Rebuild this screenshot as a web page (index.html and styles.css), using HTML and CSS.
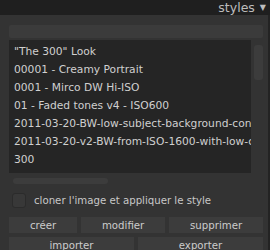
FILE: index.html
```html
<!DOCTYPE html>
<html lang="fr">
<head>
    <meta charset="UTF-8">
    <title>styles</title>
    <link rel="stylesheet" href="styles.css">
</head>
<body>
    <div class="header">
        <span class="header-title">styles</span>
        <span class="header-arrow">&#9660;</span>
    </div>

    <div class="main">
        <div class="panel">
            <div class="search-entry"></div>

            <div class="list-row">
                <div class="style-list">
                    <div class="style-item">"The 300" Look</div>
                    <div class="style-item">00001 - Creamy Portrait</div>
                    <div class="style-item">0001 - Mirco DW Hi-ISO</div>
                    <div class="style-item">01 - Faded tones v4 - ISO600</div>
                    <div class="style-item">2011-03-20-BW-low-subject-background-contrast</div>
                    <div class="style-item">2011-03-20-v2-BW-from-ISO-1600-with-low-contrast</div>
                    <div class="style-item">300</div>
                </div>
                <div class="vscroll">
                    <div class="vscroll-thumb"></div>
                </div>
            </div>

            <div class="hscroll"></div>

            <label class="check-row">
                <span class="checkbox"></span>
                <span class="check-label">cloner l'image et appliquer le style</span>
            </label>

            <div class="button-row">
                <button class="btn">créer</button>
                <button class="btn">modifier</button>
                <button class="btn">supprimer</button>
            </div>
            <div class="button-row even">
                <button class="btn">importer</button>
                <button class="btn">exporter</button>
            </div>
        </div>
        <div class="edge"></div>
    </div>
</body>
</html>
```

FILE: styles.css
```css
body {
    margin: 0;
    background-color: #333333;
    font-family: "DejaVu Sans", sans-serif;
    font-size: 10.2px;
    color: #cccccc;
    overflow: hidden;
}

.header {
    height: 15px;
    background-color: #1f1f1f;
    display: flex;
    justify-content: flex-end;
    align-items: center;
    padding-right: 4px;
    gap: 5px;
}

.header-title {
    font-size: 12.5px;
    color: #bdbdbd;
    line-height: 15px;
}

.header-arrow {
    font-size: 8px;
    color: #bdbdbd;
    line-height: 15px;
}

.main {
    display: flex;
    height: 235px;
}

.panel {
    width: 254px;
    padding: 10px 5px 0 9px;
}

.edge {
    width: 2px;
    background-color: #232323;
}

.search-entry {
    height: 13px;
    background-color: #3b3b3b;
    border-radius: 2px;
    margin-bottom: 2px;
}

.list-row {
    display: flex;
    gap: 3px;
}

.style-list {
    flex: 1;
    min-width: 0;
    height: 126px;
    padding: 3px 0 4px 5px;
    background-color: #252525;
    overflow: hidden;
}

.style-item {
    height: 18px;
    line-height: 18px;
    font-size: 10.7px;
    white-space: nowrap;
    color: #d0d0d0;
}

.vscroll {
    width: 9px;
}

.vscroll-thumb {
    margin-top: 5px;
    height: 35px;
    border-radius: 3px;
    background-color: #3c3c3c;
}

.hscroll {
    width: 95px;
    height: 6px;
    margin: 5px 0 0 4px;
    border-radius: 3px;
    background-color: #3c3c3c;
}

.check-row {
    display: flex;
    align-items: center;
    gap: 8px;
    margin: 9px 0 0 3px;
    height: 14px;
}

.checkbox {
    width: 12px;
    height: 13px;
    border: 1px solid #2b2b2b;
    border-radius: 3px;
    background-color: #383838;
}

.check-label {
    color: #c8c8c8;
}

.button-row {
    display: flex;
    gap: 4px;
    margin-top: 10px;
}

.button-row.even {
    margin-top: 4px;
}

.btn {
    flex: 1 1 auto;
    height: 16px;
    padding: 0;
    border: none;
    background-color: #3c3c3c;
    font-family: "DejaVu Sans", sans-serif;
    font-size: 10.2px;
    color: #cccccc;
}

.button-row.even .btn {
    flex: 1 1 0;
}
```
